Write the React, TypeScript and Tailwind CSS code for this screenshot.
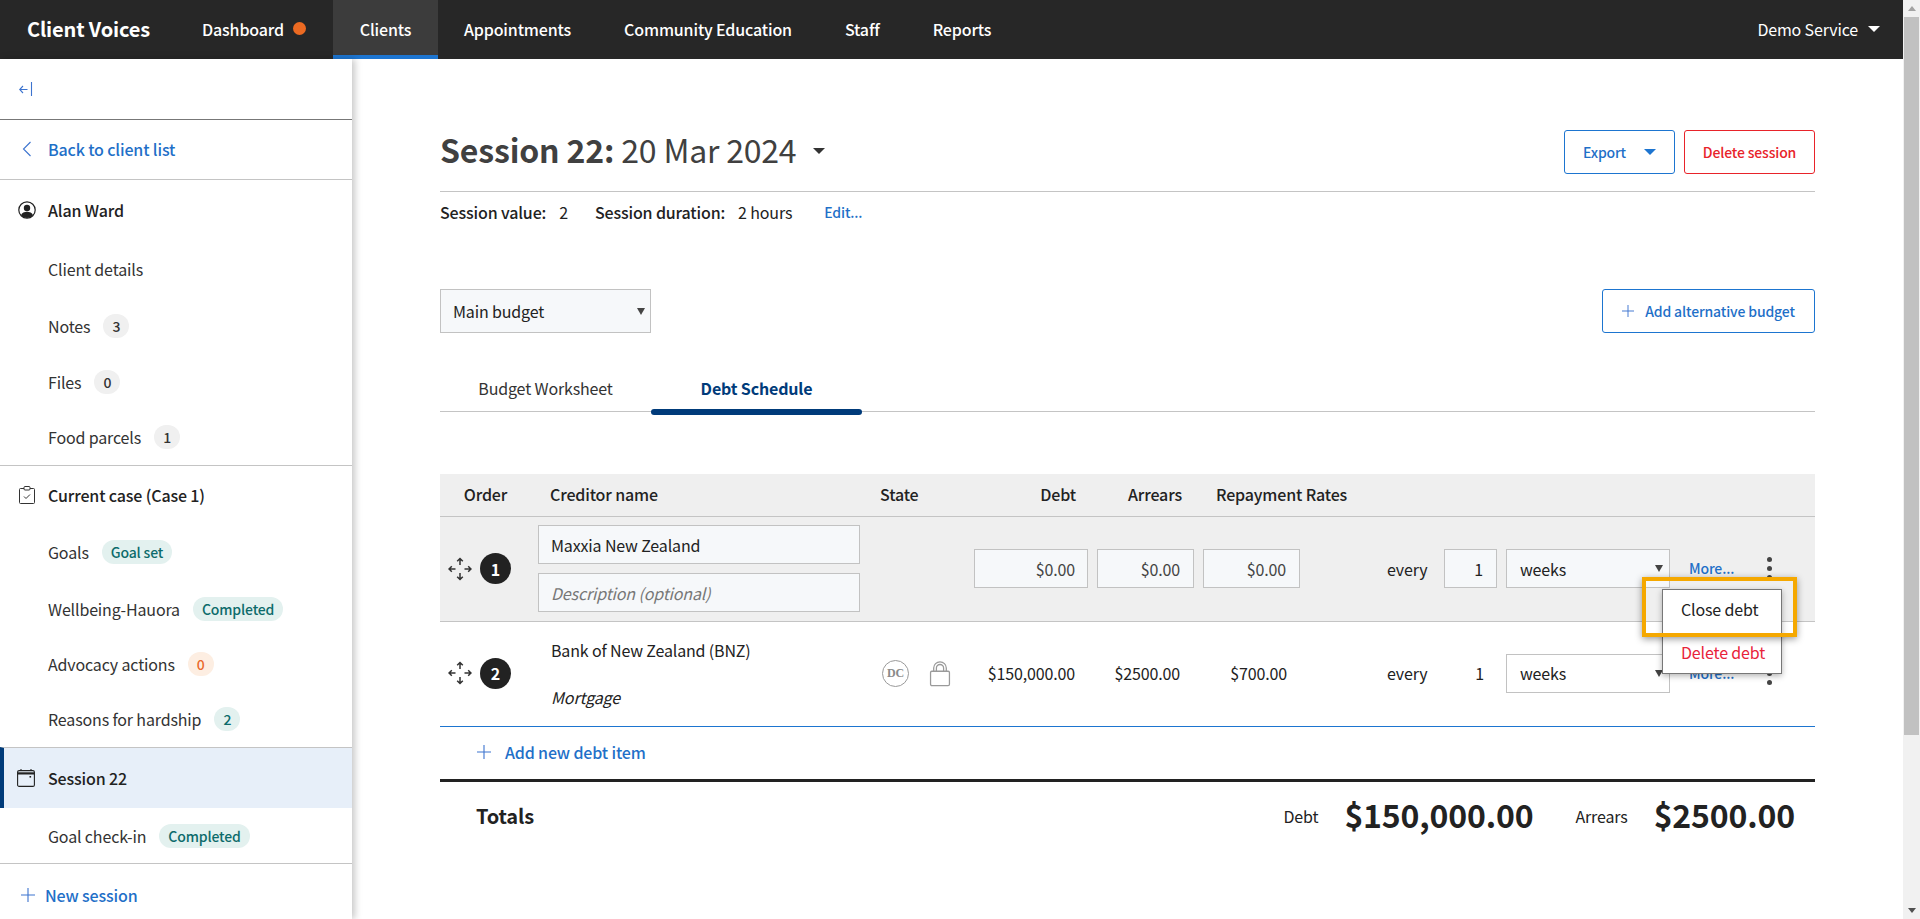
const cols =
  "grid grid-cols-[98px_322px_114px_123px_106px_97px_144px_62px_164px_85px_1fr] items-center";
const field = "h-[39px] border border-[#c2c2c2] flex items-center";

const Caret = ({ className }: { className: string }) => (
  <span
    className={`inline-block w-0 h-0 border-x-[6px] border-x-transparent border-t-[6px] ${className}`}
  />
);

const PlusIcon = ({ className }: { className?: string }) => (
  <svg viewBox="0 0 14 14" className={className} fill="none" stroke="currentColor" strokeWidth="1.1">
    <path d="M7 0v14M0 7h14" />
  </svg>
);

const MoveIcon = () => (
  <svg viewBox="0 0 24 24" className="w-6 h-6" fill="none" stroke="#333" strokeWidth="1.5">
    <path d="M12 1.500v6.500M9.200 4.300 12 1.500l2.800 2.800M12 16v6.500M9.200 19.700 12 22.500l2.800-2.800M1 12h6.500M3.800 9.200 1 12l2.800 2.800M16.500 12H23M20.200 9.200 23 12l-2.800 2.800" />
  </svg>
);

const LockIcon = () => (
  <svg viewBox="0 0 24 30" className="w-[22px] h-[27px]" fill="none" stroke="#9a9a9a" strokeWidth="1.4">
    <rect x="1.5" y="12.5" width="21" height="16" rx="1.5" />
    <path d="M5 12.5V9a7 7 0 0 1 14 0v3.5M8 12.5V9a4 4 0 0 1 8 0v3.5" />
  </svg>
);

const Kebab = () => (
  <div className="flex flex-col items-center gap-[4px] w-[5px] ml-[12px]">
    <span className="w-[5px] h-[5px] rounded-full bg-[#444]" />
    <span className="w-[5px] h-[5px] rounded-full bg-[#444]" />
    <span className="w-[5px] h-[5px] rounded-full bg-[#444]" />
  </div>
);

const Pill = ({ children, tone }: { children: React.ReactNode; tone: "grey" | "teal" | "orange" }) => {
  const tones = {
    grey: "bg-[#f0f0f0] text-[#333]",
    teal: "bg-[#e3f1ef] text-[#0d6b6b]",
    orange: "bg-[#fdeee2] text-[#ea6a2d]",
  };
  return (
    <span className={`ml-[13px] h-[24px] min-w-[26px] px-[9px] rounded-full flex items-center justify-center text-[14px] leading-none font-medium ${tones[tone]}`}>
      {children}
    </span>
  );
};

const SideLink = ({ label, h, children }: { label: string; h: string; children?: React.ReactNode }) => (
  <div className={`flex items-center pl-[48px] text-[16px] text-[#333] ${h}`}>
    {label}
    {children}
  </div>
);

const Sidebar = () => (
  <aside className="w-[352px] shrink-0 bg-white shadow-[3px_0_7px_rgba(0,0,0,0.22)] z-10 flex flex-col overflow-hidden">
    <div className="h-[61px] shrink-0 border-b border-[#777] flex items-center pl-[19px]">
      <svg viewBox="0 0 14 16" className="w-[14px] h-[16px]" fill="none" stroke="#3d74cf" strokeWidth="1.1">
        <path d="M0.5 8.5h8M4 5 .7 8.5 4 12M12.5 1v14" />
      </svg>
    </div>
    <div className="h-[60px] shrink-0 border-b border-[#c4c4c4] flex items-center pl-[22px] pb-[2px] text-[16px] font-medium text-[#1f70c8]">
      <svg viewBox="0 0 10 16" className="w-[10px] h-[16px] mr-[16px]" fill="none" stroke="#3d74cf" strokeWidth="1.1">
        <path d="M8.5 1 1.5 8l7 7" />
      </svg>
      Back to client list
    </div>
    <div className="h-[60px] shrink-0 flex items-center pl-[18px] pb-[1px] text-[16px] font-medium text-[#222]">
      <svg viewBox="0 0 18 18" className="w-[18px] h-[18px] mr-[12px]">
        <circle cx="9" cy="9" r="8.2" fill="none" stroke="#222" strokeWidth="1.2" />
        <circle cx="9" cy="7" r="3.2" fill="#222" />
        <path d="M3 14.2c1-2.6 3.400-3.400 6-3.400s5 .8 6 3.400A8 8 0 0 1 9 17a8 8 0 0 1-6-2.800z" fill="#222" />
      </svg>
      Alan Ward
    </div>
    <SideLink label="Client details" h="h-[58px] shrink-0 pb-[1px]" />
    <SideLink label="Notes" h="h-[56px] shrink-0 pb-[1px]"><Pill tone="grey">3</Pill></SideLink>
    <SideLink label="Files" h="h-[56px] shrink-0 pb-[1px]"><Pill tone="grey">0</Pill></SideLink>
    <SideLink label="Food parcels" h="h-[55px] shrink-0 pb-[1px]"><Pill tone="grey">1</Pill></SideLink>
    <div className="h-[59px] shrink-0 border-t border-[#c4c4c4] flex items-center pl-[19px] text-[16px] font-medium text-[#222]">
      <svg viewBox="0 0 16 18" className="w-[16px] h-[18px] mr-[13px]" fill="none" stroke="#333" strokeWidth="1">
        <path d="M5 2.500H1.500a1 1 0 0 0-1 1v13a1 1 0 0 0 1 1h13a1 1 0 0 0 1-1v-13a1 1 0 0 0-1-1H11" />
        <rect x="5" y="0.500" width="6" height="3.500" rx="1" />
        <path d="m5 10.500 2 2 4-4" />
      </svg>
      Current case (Case 1)
    </div>
    <SideLink label="Goals" h="h-[56px] shrink-0"><Pill tone="teal">Goal set</Pill></SideLink>
    <SideLink label="Wellbeing-Hauora" h="h-[56px] shrink-0 pt-[2px]"><Pill tone="teal">Completed</Pill></SideLink>
    <SideLink label="Advocacy actions" h="h-[55px] shrink-0"><Pill tone="orange">0</Pill></SideLink>
    <SideLink label="Reasons for hardship" h="h-[56px] shrink-0"><Pill tone="teal">2</Pill></SideLink>
    <div className="h-[61px] shrink-0 border-t border-[#c4c4c4] bg-[#e7eff9] border-l-[4px] border-l-[#003b7a] flex items-center pl-[13px] text-[16px] font-medium text-[#222]">
      <svg viewBox="0 0 18 18" className="w-[18px] h-[18px] mr-[13px]" fill="none" stroke="#222" strokeWidth="1.100">
        <rect x="0.600" y="1.600" width="16.800" height="15.800" rx="1.500" />
        <path d="M.6 4.400h16.800" strokeWidth="2.200" />
        <path d="M4 0v2M14 0v2" />
        <rect x="12.500" y="7" width="1.600" height="1.600" fill="#222" stroke="none" />
      </svg>
      Session 22
    </div>
    <SideLink label="Goal check-in" h="h-[55px] shrink-0"><Pill tone="teal">Completed</Pill></SideLink>
    <div className="h-[62px] shrink-0 border-t border-[#c4c4c4] flex items-center pl-[21px] text-[16px] font-medium text-[#1f70c8]">
      <PlusIcon className="w-[14px] h-[14px] mr-[10px] text-[#3d74cf]" />
      New session
    </div>
  </aside>
);

const Header = () => (
  <header className="h-[59px] shrink-0 bg-[#272727] flex items-stretch text-white text-[16px] font-medium">
    <div className="flex items-center pl-[27px] pb-[2px] w-[202px] text-[20px] font-bold">Client Voices</div>
    <div className="flex items-center w-[131px] pb-[2px]">
      Dashboard
      <span className="ml-[9px] w-[13px] h-[13px] rounded-full bg-[#ec6a22]" />
    </div>
    <div className="w-[105px] bg-[#3c3c3c] border-b-[4px] border-[#1d75d0] flex items-center justify-center pt-[2px]">Clients</div>
    <div className="flex items-center gap-[53px] pl-[26px] pb-[2px]">
      <span>Appointments</span>
      <span>Community Education</span>
      <span>Staff</span>
      <span>Reports</span>
    </div>
    <div className="ml-auto flex items-center pr-[23px] pb-[2px] font-normal">
      Demo Service
      <Caret className="ml-[10px] border-t-white" />
    </div>
  </header>
);

const TitleBlock = () => (
  <>
    <div className="h-[133px] pt-[71px] flex items-start justify-between border-b border-[#c4c4c4]">
      <h1 className="h-[44px] pb-[6px] flex items-center text-[32px] text-[#404040] leading-none">
        <b className="font-bold">Session 22:</b>
        <span className="ml-[7px] tracking-[-0.2px]">20 Mar 2024</span>
        <Caret className="ml-[17px] mt-[3px] border-t-[#333]" />
      </h1>
      <div className="flex gap-[9px] text-[14px] font-medium">
        <button className="h-[44px] w-[111px] border border-[#1d75d0] rounded-[3px] text-[#1f70c8] flex items-center justify-center">
          Export
          <Caret className="ml-[18px] border-t-[#1d75d0]" />
        </button>
        <button className="h-[44px] w-[131px] border border-[#e8232a] rounded-[3px] text-[#e8232a]">
          Delete session
        </button>
      </div>
    </div>
    <div className="h-[41px] pb-[1px] flex items-center text-[16px] text-[#222]">
      <b className="font-medium">Session value:</b>
      <span className="ml-[13px]">2</span>
      <b className="font-medium ml-[27px]">Session duration:</b>
      <span className="ml-[13px]">2 hours</span>
      <span className="ml-[32px] text-[14px] font-medium text-[#1f70c8]">Edit...</span>
    </div>
  </>
);

const Controls = () => (
  <>
    <div className="mt-[56px] flex justify-between items-center">
      <div className="w-[211px] h-[44px] border border-[#c2c2c2] bg-[#f6f8fa] flex items-center justify-between pl-[12px] pr-[5px] text-[16px] text-[#222]">
        Main budget
        <span className="w-0 h-0 border-x-[4px] border-x-transparent border-t-[7px] border-t-[#444]" />
      </div>
      <button className="w-[213px] h-[44px] border border-[#1d75d0] rounded-[3px] text-[14px] font-medium text-[#1f70c8] flex items-center justify-center">
        <PlusIcon className="w-[12px] h-[12px] mr-[11px] text-[#3d74cf]" />
        Add alternative budget
      </button>
    </div>
    <div className="mt-[30px] h-[49px] border-b border-[#c4c4c4] flex text-[16px] pt-[1px]">
      <div className="w-[211px] flex items-center justify-center text-[#333]">Budget Worksheet</div>
      <div className="relative w-[211px] flex items-center justify-center font-bold text-[#003b7a]">
        Debt Schedule
        <span className="absolute left-0 right-0 -bottom-[4px] h-[6px] rounded-full bg-[#003b7a]" />
      </div>
    </div>
  </>
);

const OrderCell = ({ n }: { n: number }) => (
  <div className="flex items-center pl-[8px] gap-[8px]">
    <MoveIcon />
    <span className="w-[31px] h-[31px] rounded-full bg-[#222] text-white flex items-center justify-center text-[16px] font-bold">{n}</span>
  </div>
);

const DebtTable = () => (
  <div className="relative mt-[62px] text-[16px] text-[#222]">
    <div className={`${cols} h-[43px] pb-[2px] bg-[#efefef] border-b border-[#c4c4c4] font-medium`}>
      <div className="text-center pr-[7px]">Order</div>
      <div className="pl-[12px]">Creditor name</div>
      <div className="pl-[20px]">State</div>
      <div className="text-right pr-[21px]">Debt</div>
      <div className="text-right pr-[21px]">Arrears</div>
      <div className="pl-[13px] whitespace-nowrap">Repayment Rates</div>
    </div>

    <div className={`${cols} h-[105px] pb-[1px] bg-[#efefef] border-b border-[#c4c4c4]`}>
      <OrderCell n={1} />
      <div className="flex flex-col gap-[9px]">
        <div className={`${field} h-[38px] bg-[#f6f8fa] pl-[12px]`}>Maxxia New Zealand</div>
        <div className={`${field} bg-[#f6f8fa] pl-[12px] italic text-[#777]`}>Description (optional)</div>
      </div>
      <div />
      <div className="pr-[9px]"><div className={`${field} bg-[#f6f8fa] justify-end pr-[12px] text-[#444]`}>$0.00</div></div>
      <div className="pr-[9px]"><div className={`${field} bg-[#f6f8fa] justify-end pr-[13px] text-[#444]`}>$0.00</div></div>
      <div><div className={`${field} bg-[#f6f8fa] justify-end pr-[13px] text-[#444]`}>$0.00</div></div>
      <div className="pl-[87px]">every</div>
      <div className="pr-[9px]"><div className={`${field} bg-[#f6f8fa] justify-end pr-[13px]`}>1</div></div>
      <div className={`${field} bg-[#f6f8fa] justify-between pl-[13px] pr-[6px]`}>
        weeks
        <span className="w-0 h-0 border-x-[4px] border-x-transparent border-t-[7px] border-t-[#444]" />
      </div>
      <div className="pl-[19px] text-[14px] font-medium text-[#1f70c8]">More...</div>
      <Kebab />
    </div>

    <div className={`${cols} h-[105px] pb-[2px] bg-white border-b border-[#1d75d0]`}>
      <OrderCell n={2} />
      <div className="pl-[13px] h-full flex flex-col justify-center gap-[23px]">
        <div className="leading-[24px]">Bank of New Zealand (BNZ)</div>
        <div className="leading-[24px] italic">Mortgage</div>
      </div>
      <div className="pl-[20px] flex items-center gap-[20px]">
        <span className="w-[27px] h-[27px] ml-[2px] rounded-full border-[1.5px] border-[#9a9a9a] text-[#8a8a8a] flex items-center justify-center text-[12px] font-bold font-['Liberation_Serif',serif]">DC</span>
        <LockIcon />
      </div>
      <div className="text-right pr-[22px]">$150,000.00</div>
      <div className="text-right pr-[23px]">$2500.00</div>
      <div className="text-right pr-[13px]">$700.00</div>
      <div className="pl-[87px]">every</div>
      <div className="text-right pr-[22px]">1</div>
      <div className={`${field} bg-white justify-between pl-[13px] pr-[6px]`}>
        weeks
        <span className="w-0 h-0 border-x-[4px] border-x-transparent border-t-[7px] border-t-[#444]" />
      </div>
      <div className="pl-[19px] text-[14px] font-medium text-[#1f70c8]">More...</div>
      <Kebab />
    </div>

    <div className="h-[52px] flex items-center pl-[37px] pb-[3px] font-medium text-[#1f70c8]">
      <PlusIcon className="w-[14px] h-[14px] mr-[14px] text-[#3d74cf]" />
      Add new debt item
    </div>
    <div className="border-t-[3px] border-[#222] h-[72px] pb-[2px] flex items-center pl-[36px]">
      <span className="text-[20px] font-bold">Totals</span>
      <span className="ml-auto">Debt</span>
      <span className="ml-[26px] mb-[3px] text-[32px] font-bold">$150,000.00</span>
      <span className="ml-[42px]">Arrears</span>
      <span className="ml-[26px] mb-[3px] mr-[20px] text-[32px] font-bold">$2500.00</span>
    </div>

    {/* open row menu */}
    <div className="absolute left-[1222px] top-[115px] w-[120px] h-[85px] bg-white border border-[#777] shadow-[0_2px_6px_rgba(0,0,0,0.3)] z-10 flex flex-col">
      <div className="h-[41px] pb-[3px] flex items-center pl-[18px]">Close debt</div>
      <div className="h-[42px] flex items-center pl-[18px] text-[#e8233a]">Delete debt</div>
    </div>
    <div className="absolute left-[1202px] top-[103px] w-[155px] h-[60px] border-[4px] border-[#f5a800] shadow-[0_2px_7px_rgba(0,0,0,0.4)] z-20" />
  </div>
);

const Scrollbar = () => (
  <div className="w-[17px] shrink-0 bg-[#f1f1f1] flex flex-col items-center">
    <div className="h-[17px] flex items-center justify-center">
      <span className="w-0 h-0 border-x-[4px] border-x-transparent border-b-[5px] border-b-[#a3a3a3]" />
    </div>
    <div className="w-[15px] h-[718px] bg-[#c1c1c1]" />
    <div className="mt-auto h-[17px] flex items-center justify-center">
      <span className="w-0 h-0 border-x-[4px] border-x-transparent border-t-[5px] border-t-[#505050]" />
    </div>
  </div>
);

export default function App() {
  return (
    <div className="h-[919px] flex overflow-hidden bg-white tracking-[-0.15px] font-['Noto_Sans_CJK_SC','Noto_Sans',sans-serif]">
      <div className="flex-1 min-w-0 flex flex-col">
        <Header />
        <div className="flex flex-1 min-h-0">
          <Sidebar />
          <main className="flex-1 min-w-0 px-[88px]">
            <TitleBlock />
            <Controls />
            <DebtTable />
          </main>
        </div>
      </div>
      <Scrollbar />
    </div>
  );
}
